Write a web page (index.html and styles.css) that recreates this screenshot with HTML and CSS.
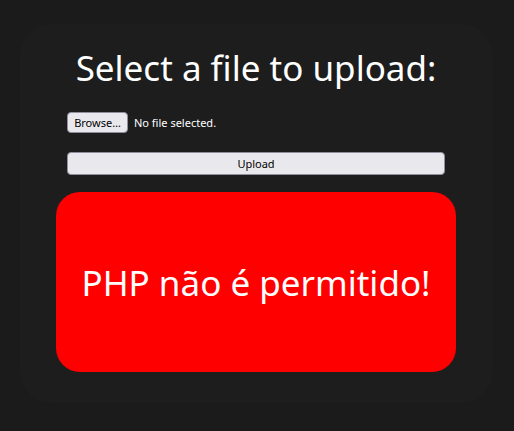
FILE: index.html
```html
<!DOCTYPE html>
<html lang="pt">
<head>
  <meta charset="UTF-8">
  <meta name="viewport" content="width=device-width, initial-scale=1.0">
  <title>Upload</title>
  <link rel="stylesheet" href="styles.css">
</head>
<body>
  <div class="card">
    <h1 class="title">Select a file to upload:</h1>
    <form class="upload-form" action="#" method="post" enctype="multipart/form-data">
      <label class="file-row">
        <input type="file" name="file" class="file-hidden">
        <span class="btn btn-browse">Browse…</span>
        <span class="file-name">No file selected.</span>
      </label>
      <input type="submit" value="Upload" class="btn btn-upload">
    </form>
    <div class="alert">PHP não é permitido!</div>
  </div>
</body>
</html>
```

FILE: styles.css
```css
body {
  margin: 0px;
  background-color: #1b1b1b;
  font-family: "Noto Sans", "Open Sans", sans-serif;
  color: white;
}
.card {
  margin: 24px 21px 28px 20px;
  height: 379px;
  box-sizing: border-box;
  background-color: #1d1d1d;
  border-radius: 32px;
  padding: 24px 37px 0 36px;
  display: flex;
  flex-direction: column;
}
.title {
  margin: 0;
  font-weight: normal;
  font-size: 35px;
  line-height: 40px;
  text-align: center;
}
.upload-form {
  margin: 24px 11px 0 11px;
  display: flex;
  flex-direction: column;
  gap: 19px;
}
.file-row {
  display: flex;
  align-items: center;
  gap: 6px;
  cursor: pointer;
}
.file-hidden {
  display: none;
}
.file-name {
  font-size: 11px;
}
.btn {
  font-family: "Noto Sans", sans-serif;
  font-size: 11px;
  color: black;
  background-color: #e9e9ed;
  border: 1px solid #8f8f9d;
  border-radius: 4px;
  box-sizing: border-box;
  cursor: pointer;
}
.btn-browse {
  display: inline-block;
  width: 61px;
  text-align: center;
  height: 21px;
  line-height: 19px;
}
.btn-upload {
  width: 378px;
  height: 23px;
  padding: 0;
}
.btn:hover {
  background-color: #d0d0d7;
}
.alert {
  margin-top: 17px;
  height: 180px;
  background-color: #ff0000;
  border-radius: 24px;
  display: flex;
  justify-content: center;
  align-items: center;
  font-size: 35px;
}
```
